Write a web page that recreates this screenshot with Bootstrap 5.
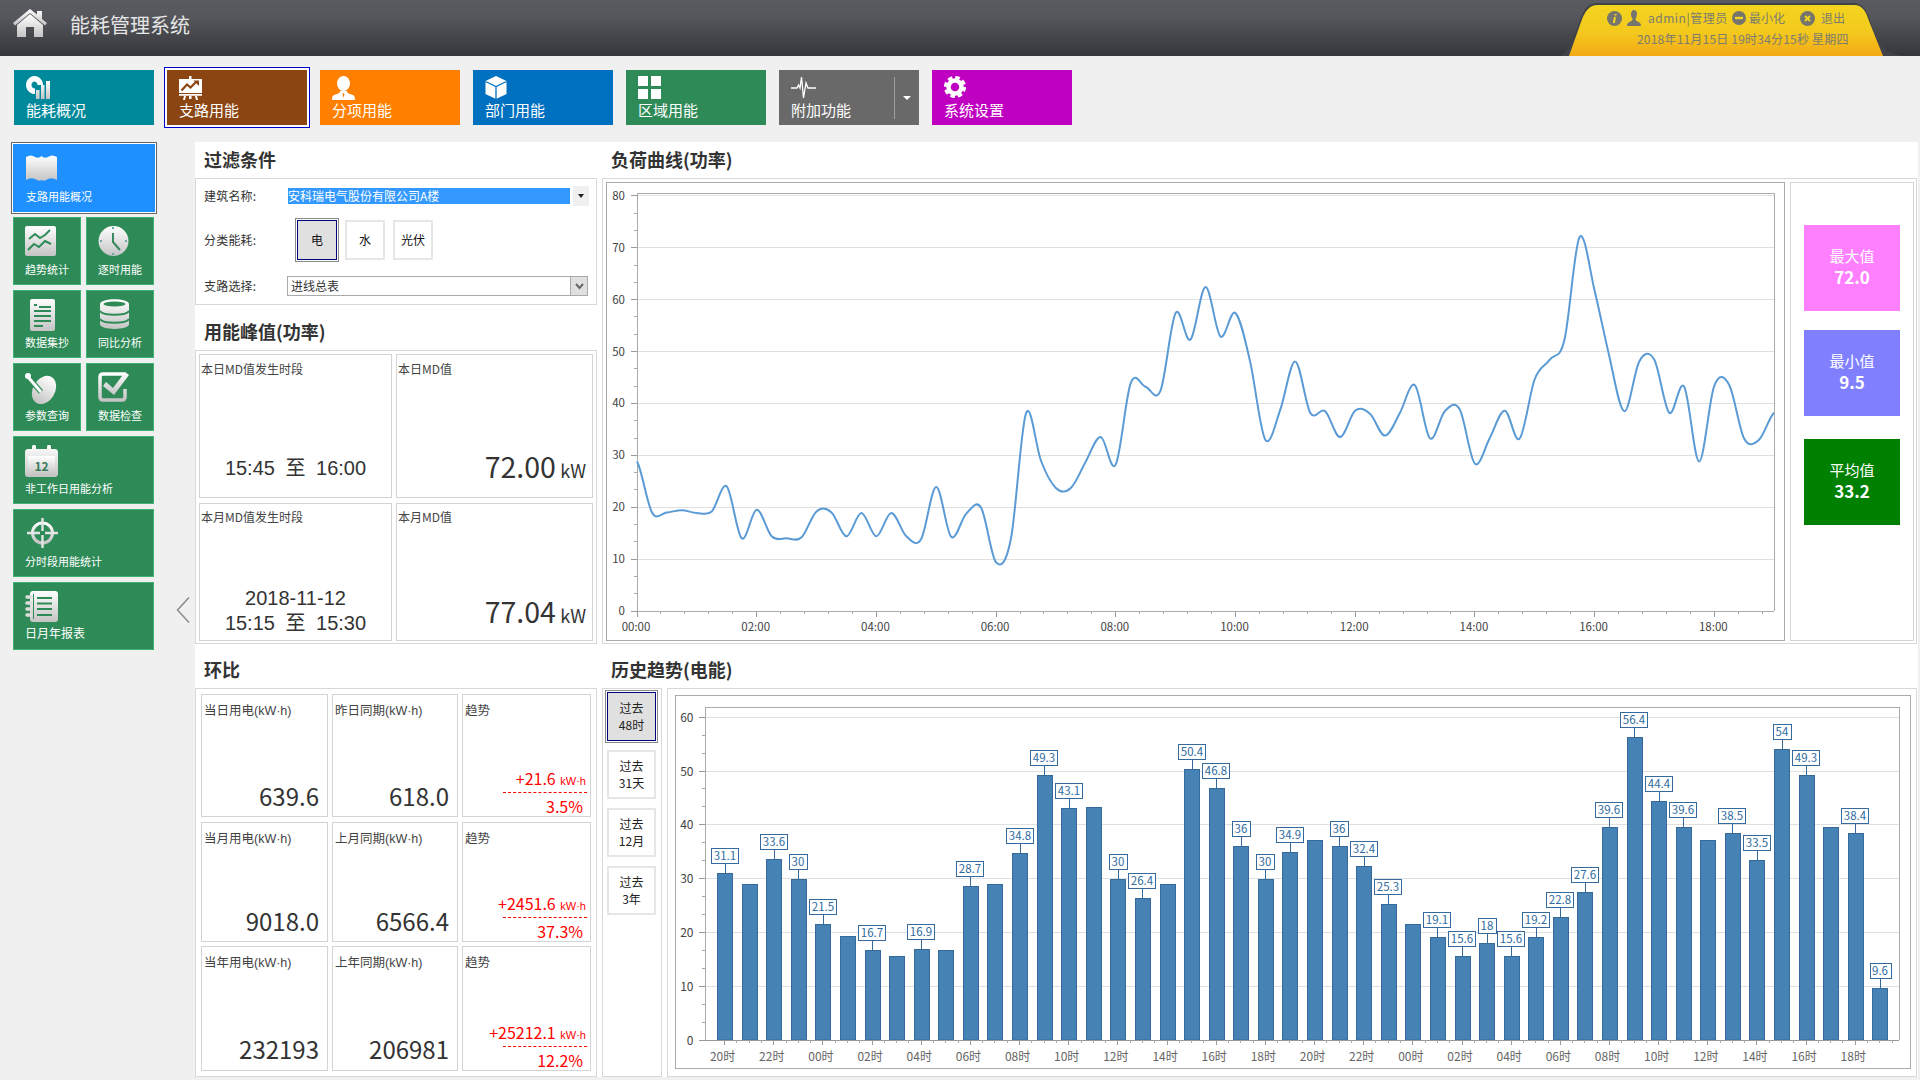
<!DOCTYPE html>
<html lang="zh-CN">
<head>
<meta charset="utf-8">
<title>能耗管理系统</title>
<link href="https://cdn.jsdelivr.net/npm/bootstrap@5.3.0/dist/css/bootstrap.min.css" rel="stylesheet">
<style>
html,body{margin:0;width:1920px;height:1080px;overflow:hidden;background:#f0f0f0}
body{font-family:"Noto Sans CJK SC","Liberation Sans",sans-serif;font-size:12px;color:#333}
.gdefs{display:block;width:0;height:0}
.app-head{height:56px;background:linear-gradient(#5a5b60,#56575c 30%,#33363a)}
.head-title{font-size:20px;color:#e6e6e6;line-height:50px;margin-left:23px}
.home-ico{margin:9px 0 0 13px;width:34px;height:28px}
.tab-wrap{width:345px;height:56px;margin-left:auto;margin-right:15px;position:relative}
.tab-shape{position:absolute;left:0;top:0}
.tab-txt{position:relative;color:#7c7c70;padding-top:10px;height:56px}
.tab-row1{height:16px;line-height:16px;padding-left:47px;align-items:center}
.tab-row2{line-height:16px;margin-top:5px;padding-left:77px;letter-spacing:.2px}
.top-nav{height:86px;padding:14px 0 0 14px;gap:13px}
.nav-tile{width:140px;height:55px;padding:6px 12px 6px;color:#fff;font-size:15px;line-height:18px;border:0;border-radius:0;text-align:left}
.nav-tile:hover{color:#fff}
.nav-tile svg{display:block;flex:none}
.nav-lab{margin-top:auto}
.c-teal{background:#00899b}.c-brown{background:#8b4513;box-shadow:0 0 0 2px #fff,0 0 0 3px #0000cd}
.c-orange{background:#ff8000}.c-blue{background:#0070c0}.c-green{background:#2e8b57}
.c-gray{background:#696969}.c-mag{background:#c000c0}
.nav-split{width:25px;height:42px;margin:7px 0 0 auto;border-left:1px solid #a0a0a0;color:#fff}
.caret-w{width:0;height:0;border:4px solid transparent;border-top:4px solid #fff;border-bottom:0}
.nav-main{width:115px;padding:6px 0 6px 12px}
.side-col{width:195px;padding:2px 0 0 13px;flex:none}
.side-grid{width:141px;display:grid;grid-template-columns:68px 68px;gap:5px;align-content:start}
.side-tile{height:68px;background:#2e8b57;border:1px solid #3cb371;color:#fff;padding:8px 0 8.500px 11px;font-size:11px;line-height:14px;white-space:nowrap}
.side-tile svg{display:block;flex:none}
.side-lab{margin-top:auto}
.span-2{grid-column:span 2}
.side-on{width:142px;background:#1e90ff;border:0;box-shadow:0 0 0 1px #fff,0 0 0 2px #666;padding:10px 0 9.500px 13px}
.chev{margin:453px 0 0 22px;height:26px}
.work-panel{width:1723px;height:935px;background:#fff;flex:none}
.col-left{width:402px;margin-right:5px}
.col-right{width:1315px}
.sec-title{font-size:18px;font-weight:700;line-height:25px;padding:0 0 6.500px 9px;color:#333;align-items:flex-end}
.h-36{height:36px}.h-45{height:45px}.h-44{height:44px}
.sec-box{border:1px solid #d8d8d8;border-radius:0;background:#fff}
.filter-box{height:127px;padding:7px 7px 0 8px}
.f-lab{width:83px;flex:none;line-height:20px;letter-spacing:.2px}
.f-row{height:20px}
.sel-a{width:302px;height:20px;background:#fff;padding:2px 0 2px 1px}
.sel-hi{width:282px;height:16px;line-height:16px;background:#39f;color:#fff;flex:none;white-space:nowrap}
.sel-arrow{width:16px;height:20px;margin:-2px 0 -2px auto;background:#f0f0f0;align-items:center;justify-content:center}
.caret-k{width:0;height:0;border:3px solid transparent;border-top:4px solid #222;border-bottom:0}
.sel-b{width:301px;height:20px;border:1px solid #aaa;line-height:18px;padding-left:3px}
.sel-b-arrow{width:17px;height:18px;margin-left:auto;background:#e0e0e0;border-left:1px solid #aaa;align-items:center;justify-content:center}
.kind-row{margin-top:14px;height:40px}
.kind-list{margin-left:10px;gap:8px}
.kind-btn{width:40px;height:40px;padding:0;border:2px solid #e6e6e6;border-radius:0;background:#fff;color:#111;font-size:12px;line-height:36px}
.kind-on{background:#e0e0e0;border:1px solid #000080;line-height:38px;box-shadow:0 0 0 1px #fff,0 0 0 2px #888}
.peak-box{height:294px;padding:3px 0 0 3px;display:grid;grid-template-columns:193px 197px;grid-template-rows:144px 138px;gap:5px 4px}
.data-tile{border:1px solid #d4d4d4;border-radius:0;color:#444;padding:0 1px;background:#fff}
.t-lab{line-height:18px;font-size:12.500px;font-family:"Liberation Sans","Noto Sans CJK SC",sans-serif;white-space:nowrap}
.peak-box .t-lab{padding-top:5px;line-height:18px;height:23px;font-size:12px;font-family:"Noto Sans CJK SC","Liberation Sans",sans-serif}
.peak-box .row-two .t-lab{padding-top:4px}
.period{font-family:"Liberation Sans","Noto Sans CJK SC",sans-serif;font-size:20px;line-height:25px;color:#333;text-align:center}
.period b{font-weight:400;margin:0 5px}
.big-num{font-size:28.500px;line-height:34px;color:#333;text-align:right;padding-right:5px;margin-bottom:10px}
.row-two .big-num{margin-bottom:8px}
.big-num span{font-size:18px;margin-left:-2px}
.ratio-box{height:389px;padding:5px 0 0 5px;display:grid;grid-template-columns:127px 126px 129px;grid-template-rows:123px 120px 125px;gap:4.500px 4px}
.ratio-box .t-lab{padding:7px 0 0 1px;height:25px}
.ratio-val{font-size:24px;line-height:30px;color:#333;text-align:right;padding-right:7px;margin-bottom:5px}
.ratio-low{margin-bottom:6.500px}
.tr-num{color:#f00;font-size:16px;line-height:20px;text-align:right;padding-right:3px;margin-bottom:1px;white-space:nowrap}
.tr-num span{font-family:"Liberation Sans",sans-serif;font-size:11px;margin-left:1px}
.tr-pct{color:#f00;font-size:16px;line-height:20px;text-align:right;padding-right:6px;margin-top:3px}
.tr-line{border-top:1px dashed #f00;margin:0 2px 0 39px}
.curve-box{height:466px;padding:3px 0 0 3px;gap:5px}
.curve-chart{width:1179px;height:459px;border:1px solid #aaa}
.curve-chart svg,.hist-chart svg{display:block;position:relative;left:-1px;top:-1px}
.stat-box{width:124px;height:459px;border:1px solid #d4d4d4;padding-top:42px;padding-left:13px}
.stat-tile{width:96px;height:86px;color:#fff;text-align:center;align-items:center;justify-content:center;font-size:15px;line-height:21px;padding-bottom:4px}
.stat-tile strong{font-size:17px;font-weight:700}
.s-max{background:#ff80ff;margin-bottom:19px}.s-min{background:#8080ff;margin-bottom:23px}.s-avg{background:#008000}
.range-box{width:60px;height:389px;padding:3px 4px 0;gap:9px;margin-right:5px}
.range-btn{width:49px;height:49px;padding:0;border:1px solid #e6e6e6;border-width:2px;border-radius:0;background:#fff;color:#222;font-size:12px;line-height:16.500px}
.range-on{background:#e0e0e0;border:1px solid #000080;box-shadow:0 0 0 1px #fff,0 0 0 2px #888}
.hist-box{width:1250px;height:389px;padding:6px 0 0 7px}
.hist-chart{width:1236px;height:374px;border:1px solid #aaa}
svg text{font-family:"Noto Sans CJK SC","Liberation Sans",sans-serif}
</style>
</head>
<body>
<svg class="gdefs"><defs>
<linearGradient id="gw" x1="0" y1="0" x2="0" y2="1"><stop offset="0" stop-color="#fff"/><stop offset="1" stop-color="#c4c4c4"/></linearGradient>
<linearGradient id="gy" x1="0" y1="0" x2="0" y2="1"><stop offset="0" stop-color="#f3d520"/><stop offset=".55" stop-color="#f3c81c"/><stop offset="1" stop-color="#f3a917"/></linearGradient>
</defs></svg>

<header class="app-head d-flex">
  <svg class="home-ico" viewBox="13 9 34 28"><path fill="url(#gw)" d="M13 23 30 9l7 5.500V11h5v8l5 4-2 2.500L30 13 15 25.500Z"/><path fill="url(#gw)" d="M17 25 30 14l13 11v12h-9V27h-8v10h-9Z"/></svg>
  <div class="head-title">能耗管理系统</div>
  <div class="tab-wrap">
    <svg class="tab-shape" width="345" height="56" viewBox="1560 0 345 56">
      <path fill="#404248" d="M1561 56c8-6 13-20 19-36 4-11 8-17 18-17h256c9 0 13 8 17 20 5 17 12 31 34 33Z"/>
      <path fill="url(#gy)" d="M1569 56l12-34c4-11 8-17 17-17h256c8 0 12 6 15 16l14 35Z"/>
    </svg>
    <div class="tab-txt">
      <div class="tab-row1 d-flex">
        <svg width="15" height="15" viewBox="0 0 15 15"><circle cx="7.500" cy="7.500" r="7.500" fill="#75756e"/><path stroke="#f3d520" stroke-width="2" d="M8 6 6.800 12M8.500 3v1.500"/></svg>
        <svg class="ms-1" width="16" height="16" viewBox="0 0 16 16" style="margin-right:6px"><path fill="#75756e" d="M8 0c2 0 3 1.700 3 4s-1 4-1.500 5c0 1.500 1 2 3 3s2.500 2 2.500 4H1c0-2 .5-3 2.500-4s3-1.500 3-3C6 8 5 6.300 5 4s1-4 3-4Z"/></svg>
        <span style="letter-spacing:.5px;width:84px">admin|管理员</span>
        <svg width="14" height="14" viewBox="0 0 14 14"><circle cx="7" cy="7" r="7" fill="#75756e"/><rect x="3" y="5.800" width="8" height="2.400" fill="#f3d520"/></svg>
        <span style="margin-left:3px;width:51px">最小化</span>
        <svg width="15" height="15" viewBox="0 0 15 15"><circle cx="7.500" cy="7.500" r="7.500" fill="#75756e"/><path stroke="#f3d520" stroke-width="2" d="m5 5 5 5m0-5-5 5"/></svg>
        <span style="margin-left:6px">退出</span>
      </div>
      <div class="tab-row2">2018年11月15日 19时34分15秒 星期四</div>
    </div>
  </div>
</header>

<nav class="top-nav d-flex">
  <a class="btn nav-tile c-teal d-flex flex-column"><svg width="24" height="23" viewBox="0 0 24 23"><path fill="#fff" fill-rule="evenodd" d="M8.500 0a8.500 9 0 1 0 .01 0ZM8.500 5.500a3 3.500 0 1 1-.01 0Z"/><path fill="#00899b" d="M9 9h6v14H9Z"/><path fill="url(#gw)" d="M10 14h3.500v9H10Zm5-5h3.500v14H15Zm5-4h4v18h-4Z"/></svg><span class="nav-lab">能耗概况</span></a>
  <a class="btn nav-tile c-brown d-flex flex-column"><svg width="23" height="24" viewBox="0 0 23 24"><path fill="#fff" d="M10 0h2.500v3H10ZM0 3h23v14H0ZM0 18h23v1.800H0ZM5 20h2l-1 4H4Zm11 0h2l1 4h-2Zm-6 0h2.500v3H10Z"/><path fill="none" stroke="#8b4513" stroke-width="2.200" d="M2.500 14.500 8 8.500l3.500 3 6-6"/><path fill="#8b4513" d="M14.500 4.500H20V10Z"/></svg><span class="nav-lab">支路用能</span></a>
  <a class="btn nav-tile c-orange d-flex flex-column"><svg width="23" height="24" viewBox="0 0 23 24"><ellipse cx="11.500" cy="7.500" rx="6.500" ry="7.500" fill="#fff"/><path fill="#fff" d="M8 15h7l.5 2 5.500 2c1.500.5 2 2.500 2 5H0c0-2.500.5-4.500 2-5l5.500-2Z"/><path fill="#ff8000" d="m10.500 18 1 4 1-4-1-1Z"/></svg><span class="nav-lab">分项用能</span></a>
  <a class="btn nav-tile c-blue d-flex flex-column"><svg width="22" height="23" viewBox="0 0 22 23"><path fill="#fff" d="m11 0 10.500 5v13L11 23 .5 18V5Z"/><path fill="none" stroke="#0070c0" stroke-width="1.300" d="M.5 5.500 11 10.500l10.500-5M11 10.500V23"/></svg><span class="nav-lab">部门用能</span></a>
  <a class="btn nav-tile c-green d-flex flex-column"><svg width="23" height="23" viewBox="0 0 23 23"><path fill="#fff" d="M0 0h10v10H0Zm13 0h10v10H13ZM0 13h10v10H0Zm13 0h10v10H13Z"/></svg><span class="nav-lab">区域用能</span></a>
  <div class="d-flex c-gray nav-tile p-0"><a class="btn nav-tile nav-main c-gray d-flex flex-column"><svg width="25" height="23" viewBox="0 0 25 23"><path fill="none" stroke="#fff" stroke-width="1.300" d="M0 12h6l1.500-3 1.500 3 1.500-11 2 21 2.500-15 2 5h8"/></svg><span class="nav-lab">附加功能</span></a><div class="nav-split d-flex align-items-center justify-content-center"><span class="caret-w"></span></div></div>
  <a class="btn nav-tile c-mag d-flex flex-column"><svg width="22" height="22" viewBox="0 0 22 22"><circle cx="11" cy="11" r="6.500" fill="none" stroke="#fff" stroke-width="4.500"/><circle cx="11" cy="11" r="9.500" fill="none" stroke="#fff" stroke-width="3.200" stroke-dasharray="4.500 2.960"/></svg><span class="nav-lab">系统设置</span></a>
</nav>

<main class="d-flex">
  <aside class="side-col d-flex">
    <div class="side-grid flex-none">
      <div class="side-tile span-2 side-on d-flex flex-column"><svg width="31" height="28" viewBox="0 0 31 28"><path fill="url(#gw)" d="M0 3q5-3 9 0 4 2 6.500-1Q18 5 22 3q4-3 9 0v23q-5-3-9-1-4 3-6.500 1Q13 28 9 25q-4-2-9 1Z"/></svg><span class="side-lab">支路用能概况</span></div>
      <div class="side-tile d-flex flex-column"><svg width="31" height="30" viewBox="0 0 31 30"><rect width="31" height="30" rx="2" fill="url(#gw)"/><path fill="none" stroke="#2e8b57" stroke-width="2" d="M4 13l6-5 5 4 5-3 5-5M3 24l6-6 5 3 6-6 6 3"/></svg><span class="side-lab">趋势统计</span></div>
      <div class="side-tile d-flex flex-column"><svg width="31" height="30" viewBox="0 0 31 30"><ellipse cx="15.500" cy="15" rx="15" ry="15" fill="url(#gw)"/><path fill="none" stroke="#3a8a60" stroke-width="2" d="M15 7v9l7 8"/><path stroke="#6aa" stroke-width="2" d="M15 1v2M15 27v2M2 15h2M27 15h2"/></svg><span class="side-lab">逐时用能</span></div>
      <div class="side-tile d-flex flex-column"><svg style="margin-left:5px" width="25" height="32" viewBox="0 0 25 32"><rect width="25" height="32" rx="2" fill="url(#gw)"/><path stroke="#2e8b57" stroke-width="2" d="M4 6h3M9 8h12M4 12h17M4 17h17M4 22h17M4 27h9"/></svg><span class="side-lab">数据集抄</span></div>
      <div class="side-tile d-flex flex-column"><svg style="margin-left:2px" width="29" height="30" viewBox="0 0 29 30"><path fill="url(#gw)" d="M0 5c0-6.500 29-6.500 29 0v20c0 6.500-29 6.500-29 0Z"/><ellipse cx="14.500" cy="5" rx="11" ry="2.500" fill="#2e8b57"/><path fill="none" stroke="#2e8b57" stroke-width="2" d="M0 12c3 5 26 5 29 0M0 20c3 5 26 5 29 0"/></svg><span class="side-lab">同比分析</span></div>
      <div class="side-tile d-flex flex-column"><svg width="33" height="32" viewBox="0 0 33 32"><ellipse cx="19" cy="18" rx="11" ry="15" transform="rotate(30 19 18)" fill="url(#gw)"/><path stroke="#2e8b57" stroke-width="5.500" d="m3 5 13 15"/><path stroke="#fff" stroke-width="3" d="m3 5 13 15"/><circle cx="3" cy="4" r="3" fill="#fff"/></svg><span class="side-lab">参数查询</span></div>
      <div class="side-tile d-flex flex-column"><svg width="31" height="30" viewBox="0 0 31 30"><path fill="none" stroke="url(#gw)" stroke-width="3.500" d="M27 17v8c0 2-1 3-3 3H5c-2 0-3-1-3-3V5c0-2 1-3 3-3h22"/><path fill="url(#gw)" d="M8 10l7 6L27 0l4 3-15 20-11-9Z"/></svg><span class="side-lab">数据检查</span></div>
      <div class="side-tile span-2 d-flex flex-column"><svg width="33" height="32" viewBox="0 0 33 32"><path fill="url(#gw)" fill-rule="evenodd" d="M3 4h4V2c0-3 4-3 4 0v2h11V2c0-3 4-3 4 0v2h4c1.500 0 3 1 3 3v22c0 2-1.500 3-3 3H3c-2 0-3-1-3-3V7c0-2 1.500-3 3-3ZM3 11v18h27V11Z"/><rect x="3" y="11" width="27" height="19" fill="url(#gw)"/><text x="16.500" y="26" text-anchor="middle" font-size="12" fill="#3a7a5a" font-weight="700">12</text></svg><span class="side-lab">非工作日用能分析</span></div>
      <div class="side-tile span-2 d-flex flex-column"><svg style="margin-left:2px" width="31" height="30" viewBox="0 0 31 30"><circle cx="15.500" cy="15" r="10" fill="none" stroke="url(#gw)" stroke-width="3"/><path fill="#e4e4e4" d="M14.300 0h2.400v13h-2.400Zm0 17h2.400v13h-2.400ZM0 13.800h13v2.400H0Zm18 0h13v2.400H18Z"/></svg><span class="side-lab">分时段用能统计</span></div>
      <div class="side-tile span-2 d-flex flex-column" style="font-size:12px;padding-bottom:9px"><svg width="33" height="31" viewBox="0 0 33 31"><rect x="5" y="0" width="28" height="31" rx="3" fill="url(#gw)"/><path stroke="#2e8b57" stroke-width="2" d="M12 7h15M12 12.500h15M12 18h15M12 24h15"/><rect x="8" y="3" width="1" height="25" fill="#2e8b57"/><path stroke="#ddd" stroke-width="3.500" stroke-linecap="round" d="M2 6h4M2 12h4M2 18h4M2 24h4"/></svg><span class="side-lab">日月年报表</span></div>
    </div>
    <svg class="chev" width="14" height="26" viewBox="0 0 14 26"><path fill="none" stroke="#8a8a8a" stroke-width="1.500" d="M13 .5 1.500 13 13 25.500"/></svg>
  </aside>

  <section class="work-panel d-flex">
    <div class="col-left d-flex flex-column">
      <div class="sec-title h-36 d-flex">过滤条件</div>
      <div class="sec-box filter-box">
        <div class="d-flex f-row">
          <div class="f-lab">建筑名称:</div>
          <div class="sel-a d-flex"><span class="sel-hi">安科瑞电气股份有限公司A楼</span><span class="sel-arrow d-flex"><i class="caret-k"></i></span></div>
        </div>
        <div class="d-flex kind-row align-items-center">
          <div class="f-lab">分类能耗:</div>
          <div class="d-flex kind-list">
            <button class="btn kind-btn kind-on">电</button>
            <button class="btn kind-btn">水</button>
            <button class="btn kind-btn">光伏</button>
          </div>
        </div>
        <div class="d-flex f-row" style="margin-top:16px">
          <div class="f-lab">支路选择:</div>
          <div class="sel-b d-flex"><span>进线总表</span><span class="sel-b-arrow d-flex"><svg width="9" height="7" viewBox="0 0 9 7"><path fill="none" stroke="#666" stroke-width="2" d="m1 1 3.500 4L8 1"/></svg></span></div>
        </div>
      </div>

      <div class="sec-title h-45 d-flex">用能峰值(功率)</div>
      <div class="sec-box peak-box">
        <div class="data-tile d-flex flex-column"><div class="t-lab">本日MD值发生时段</div><div class="period mt-auto" style="margin-bottom:16px">15:45<b> 至 </b>16:00</div></div>
        <div class="data-tile d-flex flex-column"><div class="t-lab">本日MD值</div><div class="big-num mt-auto">72.00 <span>kW</span></div></div>
        <div class="data-tile d-flex flex-column row-two"><div class="t-lab">本月MD值发生时段</div><div class="period mt-auto">2018-11-12</div><div class="period" style="margin-bottom:4px">15:15<b> 至 </b>15:30</div></div>
        <div class="data-tile d-flex flex-column row-two"><div class="t-lab">本月MD值</div><div class="big-num mt-auto">77.04 <span>kW</span></div></div>
      </div>

      <div class="sec-title h-44 d-flex">环比</div>
      <div class="sec-box ratio-box">
        <div class="data-tile d-flex flex-column"><div class="t-lab">当日用电(kW·h)</div><div class="ratio-val mt-auto">639.6</div></div>
        <div class="data-tile d-flex flex-column"><div class="t-lab">昨日同期(kW·h)</div><div class="ratio-val mt-auto">618.0</div></div>
        <div class="data-tile d-flex flex-column"><div class="t-lab">趋势</div><div class="tr-num mt-auto">+21.6 <span>kW·h</span></div><div class="tr-line"></div><div class="tr-pct">3.5%</div></div>
        <div class="data-tile d-flex flex-column"><div class="t-lab">当月用电(kW·h)</div><div class="ratio-val mt-auto">9018.0</div></div>
        <div class="data-tile d-flex flex-column"><div class="t-lab">上月同期(kW·h)</div><div class="ratio-val mt-auto">6566.4</div></div>
        <div class="data-tile d-flex flex-column"><div class="t-lab">趋势</div><div class="tr-num mt-auto">+2451.6 <span>kW·h</span></div><div class="tr-line"></div><div class="tr-pct">37.3%</div></div>
        <div class="data-tile d-flex flex-column"><div class="t-lab">当年用电(kW·h)</div><div class="ratio-val ratio-low mt-auto">232193</div></div>
        <div class="data-tile d-flex flex-column"><div class="t-lab">上年同期(kW·h)</div><div class="ratio-val ratio-low mt-auto">206981</div></div>
        <div class="data-tile d-flex flex-column"><div class="t-lab">趋势</div><div class="tr-num mt-auto">+25212.1 <span>kW·h</span></div><div class="tr-line"></div><div class="tr-pct">12.2%</div></div>
      </div>
    </div>

    <div class="col-right d-flex flex-column">
      <div class="sec-title h-36 d-flex">负荷曲线(功率)</div>
      <div class="sec-box curve-box d-flex">
        <div class="curve-chart"><svg id="curve" width="1179" height="459" viewBox="606 182 1179 459"></svg></div>
        <div class="stat-box d-flex flex-column">
          <div class="stat-tile s-max d-flex flex-column"><span>最大值</span><strong>72.0</strong></div>
          <div class="stat-tile s-min d-flex flex-column"><span>最小值</span><strong>9.5</strong></div>
          <div class="stat-tile s-avg d-flex flex-column"><span>平均值</span><strong>33.2</strong></div>
        </div>
      </div>
      <div class="sec-title h-44 d-flex">历史趋势(电能)</div>
      <div class="d-flex">
        <div class="sec-box range-box d-flex flex-column">
          <button class="btn range-btn range-on">过去<br>48时</button>
          <button class="btn range-btn">过去<br>31天</button>
          <button class="btn range-btn">过去<br>12月</button>
          <button class="btn range-btn">过去<br>3年</button>
        </div>
        <div class="sec-box hist-box">
          <div class="hist-chart"><svg id="hist" width="1236" height="374" viewBox="675 695 1236 374"></svg></div>
        </div>
      </div>
    </div>
  </section>
</main>

<script src="https://cdn.jsdelivr.net/npm/bootstrap@5.3.0/dist/js/bootstrap.bundle.min.js"></script>
<script>
function ln(x1,y1,x2,y2,c){return '<line x1="'+x1+'" y1="'+y1+'" x2="'+x2+'" y2="'+y2+'" stroke="'+c+'" stroke-width="1" shape-rendering="crispEdges"/>';}
function tx(x,y,s,a,c,f){return '<text x="'+x+'" y="'+y+'" text-anchor="'+a+'" fill="'+c+'" font-size="'+f+'">'+s+'</text>';}
(function(){
  var d=[28.8,19,19,19.4,18.9,19.2,24,14,19.5,14.4,14,14.2,19.2,19,14.4,18.9,14.4,18.9,14.4,13.9,23.9,14.3,18.7,19.9,9.4,14,38.1,29,23.7,23.7,28.8,33.5,28.2,43.9,43.2,42.5,57.4,52.3,62.4,52.9,57.4,47.8,33,38.8,48.1,38.2,38.5,33.5,38.6,38,33.8,38.2,43.5,33.3,38.5,38.8,28.4,33.3,38.6,33.2,44.6,48.4,52.3,72,61.9,49,38.5,48.1,48.4,38.2,43.2,28.8,43.3,43.6,33.3,33,38.2];
  var X=function(i){return 637+14.96*i},Y=function(v){return 611-v*5.19},h='';
  for(var v=10;v<=80;v+=10){h+=ln(637,Y(v),1774,Y(v),'#e0e0e0');}
  h+=ln(637,193,1774,193,'#aaa')+ln(1774,193,1774,611,'#aaa')+ln(637,193,637,611,'#aaa')+ln(637,611,1774,611,'#aaa');
  for(v=0;v<=80;v+=10){h+=ln(631,Y(v),637,Y(v),'#999')+tx(625,Y(v)+4,v,'end','#444',11.5);
    if(v<80){h+=ln(634,Y(v+10/3),637,Y(v+10/3),'#aaa')+ln(634,Y(v+20/3),637,Y(v+20/3),'#aaa');}}
  for(var m=0;m<=47;m++){var x=637+m*23.94;
    if(x>1775)break;
    if(m%5==0){h+=ln(x,611,x,617,'#999');var hr=m/5*2;h+=tx(x-1,631,(hr<10?'0':'')+hr+':00','middle','#444',11.5);}
    else{h+=ln(x,611,x,614,'#aaa');}}
  var p='M'+X(0)+' '+Y(d[0]);
  for(var i=0;i<d.length-1;i++){
    var a=d[Math.max(i-1,0)],b=d[i],c=d[i+1],e=d[Math.min(i+2,d.length-1)];
    var x1=X(i)+14.96/3,x2=X(i+1)-14.96/3;
    var k=1/6*1.05;
    p+=' C'+x1.toFixed(1)+' '+Y(b+(c-a)*k).toFixed(1)+' '+x2.toFixed(1)+' '+Y(c-(e-b)*k).toFixed(1)+' '+X(i+1).toFixed(1)+' '+Y(c).toFixed(1);
  }
  h+='<path d="'+p+'" fill="none" stroke="#5b9bd5" stroke-width="2"/>';
  document.getElementById('curve').innerHTML=h;
})();
(function(){
  var d=[31.1,29,33.6,30,21.5,19.3,16.7,15.6,16.9,16.7,28.7,29,34.8,49.3,43.1,43.3,30,26.4,29,50.4,46.8,36,30,34.9,37.2,36,32.4,25.3,21.6,19.1,15.6,18,15.6,19.2,22.8,27.6,39.6,56.4,44.4,39.6,37.2,38.5,33.5,54,49.3,39.6,38.4,9.6];
  var nl={1:1,5:1,7:1,9:1,11:1,15:1,18:1,24:1,28:1,40:1,45:1};
  var Y=function(v){return 1040-v*5.38},X=function(i){return 724.6+24.58*i},h='';
  for(var v=10;v<=60;v+=10){h+=ln(705,Y(v),1899,Y(v),'#e0e0e0');}
  h+=ln(705,707,1899,707,'#aaa')+ln(1899,707,1899,1040,'#aaa')+ln(705,707,705,1040,'#aaa');
  for(v=0;v<=60;v+=10){h+=ln(699,Y(v),705,Y(v),'#999')+tx(693.5,Y(v)+4.5,v,'end','#444',12);
    if(v<60){h+=ln(702,Y(v+10/3),705,Y(v+10/3),'#aaa')+ln(702,Y(v+20/3),705,Y(v+20/3),'#aaa');}}
  for(var i=0;i<48;i++){
    var x=X(i),t=Y(d[i]);
    h+='<rect x="'+(Math.round(x-7.5)+.5)+'" y="'+(Math.round(t)+.5)+'" width="15" height="'+(1040-Math.round(t)-.5)+'" fill="#4682b4" stroke="#366a9c" stroke-width="1"/>';
  }
  h+=ln(705,1040,1899,1040,'#999');
  for(var j=0;j<=95;j++){var tx0=724.6+j*12.29;
    if(tx0>1899)break;
    if(j%4==0){h+=ln(tx0,1040,tx0,1045,'#999');var hr=(20+j/2)%24;h+=tx(tx0-2,1061,(hr<10?'0':'')+hr+'时','middle','#666',12);}
    else{h+=ln(tx0,1040,tx0,1043,'#aaa');}}
  for(i=0;i<48;i++){
    if(nl[i])continue;
    var s=String(d[i]),w=s.replace('.','').length*6.5+(s.indexOf('.')>=0?3:0)+4.5;
    x=Math.round(X(i));t=Math.round(Y(d[i]));
    h+=ln(x,t-9,x,t,'#366a9c');
    h+='<rect x="'+(x-Math.round(w/2)+.5)+'" y="'+(t-24.5)+'" width="'+Math.round(w)+'" height="15" fill="#fff" stroke="#366a9c" stroke-width="1"/>';
    h+=tx(x,t-13,s,'middle','#2f6b9f',11.5);
  }
  document.getElementById('hist').innerHTML=h;
})();
</script>
</body>
</html>
